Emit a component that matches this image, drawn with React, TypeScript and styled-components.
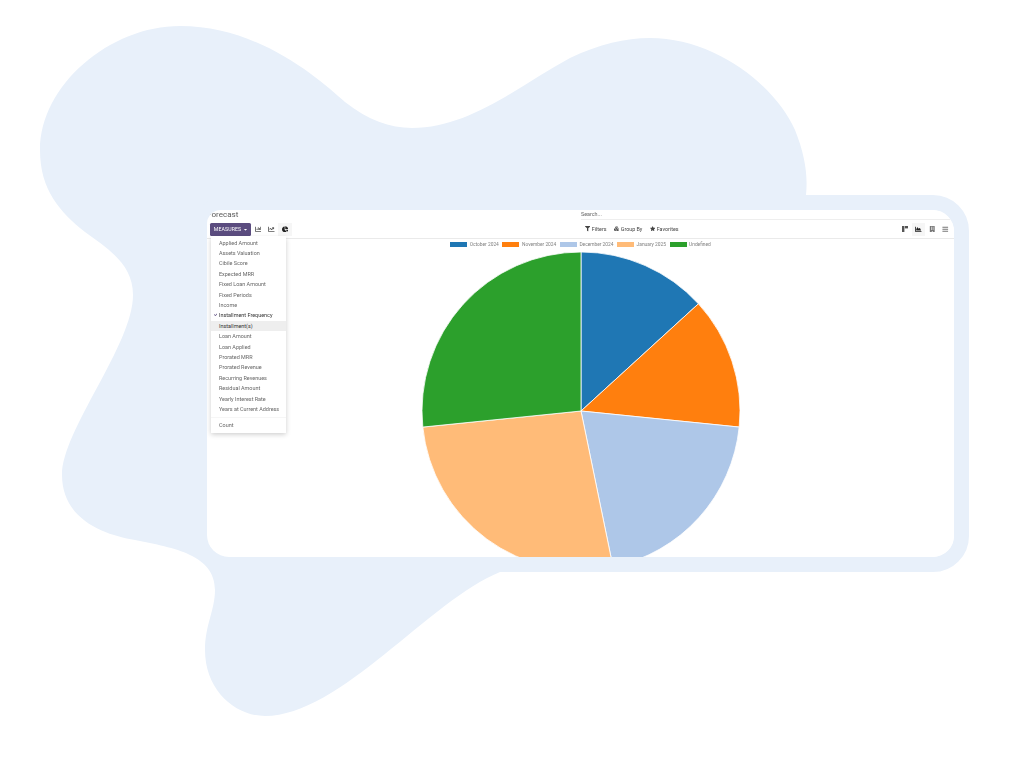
import styled, { createGlobalStyle } from "styled-components";
import {
  FaBars,
  FaBuilding,
  FaCaretDown,
  FaChartArea,
  FaChartBar,
  FaChartLine,
  FaChartPie,
  FaCheck,
  FaCubes,
  FaFilter,
  FaStar,
} from "react-icons/fa";

const GlobalStyle = createGlobalStyle`
  html, body {
    margin: 0;
    padding: 0;
    background: #ffffff;
    font-family: Roboto, "Liberation Sans", sans-serif;
  }
`;

const Page = styled.div`
  position: relative;
  width: 1024px;
  height: 768px;
  overflow: hidden;
  box-sizing: border-box;
  padding: 195px 55px 0 192px;
`;

const Blob = styled.svg`
  position: absolute;
  left: 0;
  top: 0;
  width: 1024px;
  height: 768px;
`;

const Frame = styled.div`
  position: relative;
  box-sizing: border-box;
  height: 377px;
  border: 15px solid #e8f0fa;
  border-radius: 36px;
`;

const Card = styled.div`
  height: 347px;
  background: #ffffff;
  border-radius: 14px 22px 22px 22px;
  overflow: hidden;
  position: relative;
`;

const Soft = styled.div`
  filter: blur(0.4px);
`;

const TitleRow = styled.div`
  display: flex;
  height: 9px;
  align-items: center;
`;

const Title = styled.div`
  width: 374px;
  font-size: 8.1px;
  color: #5a5a5a;
  line-height: 9px;
`;

const Search = styled.div`
  flex: 1;
  height: 9px;
  border-bottom: 1px solid #eeeeee;
  font-size: 5.4px;
  line-height: 8px;
  color: #666666;
`;

const Toolbar = styled.div`
  position: relative;
  height: 18px;
  margin-top: 1px;
  border-bottom: 1px solid #eaeaea;
  display: flex;
  align-items: center;
  padding: 0 2px 0 3px;
`;

const MeasuresBtn = styled.div`
  width: 41px;
  height: 13px;
  background: #5b4c7f;
  border-radius: 1.5px;
  color: #ffffff;
  font-size: 5.2px;
  letter-spacing: 0.1px;
  display: flex;
  align-items: center;
  justify-content: center;
  gap: 2px;
  padding-left: 1px;
  box-sizing: border-box;
`;

const ChartBtn = styled.div<{ $active?: boolean; $muted?: boolean }>`
  width: 13.5px;
  height: 13px;
  display: flex;
  align-items: center;
  justify-content: center;
  font-size: 6.5px;
  color: ${(p) => (p.$active ? "#222222" : p.$muted ? "#777777" : "#555555")};
  background: ${(p) => (p.$active ? "#f6f6f6" : "transparent")};
`;

const ChartBtns = styled.div`
  display: flex;
`;

const FilterGroup = styled.div`
  position: absolute;
  left: 378px;
  top: 0;
  height: 18px;
  display: flex;
  align-items: center;
  gap: 7.5px;
`;

const FilterBtn = styled.div`
  display: flex;
  align-items: center;
  gap: 1.5px;
  font-size: 5.35px;
  color: #444444;
  svg {
    font-size: 5.3px;
  }
`;

const ViewBtns = styled.div`
  margin-left: auto;
  display: flex;
`;

const Menu = styled.div`
  position: absolute;
  left: 4px;
  top: 16px;
  width: 75px;
  height: 197px;
  box-sizing: border-box;
  padding-top: 1.7px;
  background: #ffffff;
  box-shadow: 0 1.5px 5px rgba(0, 0, 0, 0.2);
  z-index: 2;
`;

const MenuItem = styled.div<{ $hover?: boolean; $strong?: boolean }>`
  position: relative;
  height: 10.4px;
  line-height: 10.4px;
  padding-left: 8px;
  font-size: 5.45px;
  white-space: nowrap;
  color: ${(p) => (p.$hover || p.$strong ? "#333333" : "#666666")};
  background: ${(p) => (p.$hover ? "#eeeeee" : "transparent")};
`;

const Tick = styled.span`
  position: absolute;
  left: 2.5px;
  top: 0;
  font-size: 3.5px;
  color: #5b4c7f;
`;

const MenuDivider = styled.div`
  height: 1px;
  background: #f6f6f6;
  margin: 2.2px 0;
`;

const Legend = styled.div`
  display: flex;
  justify-content: center;
  align-items: center;
  gap: 3.6px;
  height: 11px;
  font-size: 4.85px;
  color: #808080;
`;

const LegendItem = styled.div`
  display: flex;
  align-items: center;
  gap: 2.5px;
`;

const Swatch = styled.span<{ $color: string }>`
  width: 17px;
  height: 5px;
  background: ${(p) => p.$color};
`;

const PieWrap = styled.div`
  display: flex;
  justify-content: center;
  margin-top: 1px;
`;

const measures = [
  "Applied Amount",
  "Assets Valuation",
  "Cibile Score",
  "Expected MRR",
  "Fixed Loan Amount",
  "Fixed Periods",
  "Income",
  "Installment Frequency",
  "Installment(s)",
  "Loan Amount",
  "Loan Applied",
  "Prorated MRR",
  "Prorated Revenue",
  "Recurring Revenues",
  "Residual Amount",
  "Yearly Interest Rate",
  "Years at Current Address",
];

const slices = [
  { label: "October 2024", color: "#1f77b4", from: 0, to: 47.6 },
  { label: "November 2024", color: "#ff7f0e", from: 47.6, to: 95.8 },
  { label: "December 2024", color: "#aec7e8", from: 95.8, to: 168.4 },
  { label: "January 2025", color: "#ffbb78", from: 168.4, to: 264.2 },
  { label: "Undefined", color: "#2ca02c", from: 264.2, to: 360 },
];

function slicePath(from: number, to: number) {
  const r = 159;
  const point = (deg: number) => {
    const a = (deg * Math.PI) / 180;
    return `${(160 + r * Math.sin(a)).toFixed(2)} ${(160 - r * Math.cos(a)).toFixed(2)}`;
  };
  const large = to - from > 180 ? 1 : 0;
  return `M160 160 L${point(from)} A${r} ${r} 0 ${large} 1 ${point(to)} Z`;
}

function PivotIcon() {
  return (
    <svg width="6" height="6" viewBox="0 0 6 6" fill="currentColor">
      <rect x="0" y="0" width="2.4" height="6" />
      <rect x="2.9" y="0" width="3.1" height="2.4" />
    </svg>
  );
}

export default function App() {
  return (
    <Page>
      <GlobalStyle />
      <Blob viewBox="0 0 1024 768">
        <path
          fill="#e8f0fa"
          d="M180 26 C260 26 320 80 345 102 C368 120 390 128 412 128 C470 128 520 85 570 58 C600 44 625 38 650 38 C715 38 775 85 795 130 C805 155 808 175 806 195 L806 572 L500 572 C430 600 340 716 265 716 C235 716 205 690 205 650 C205 625 215 610 215 590 C215 555 175 548 135 540 C105 535 62 520 62 475 C62 430 133 345 133 295 C133 265 110 250 85 232 C60 212 40 190 40 150 C40 85 110 26 180 26 Z"
        />
      </Blob>
      <Frame>
        <Card>
          <Soft>
            <TitleRow>
              <Title>Forecast</Title>
              <Search>Search...</Search>
            </TitleRow>
            <Toolbar>
              <MeasuresBtn>
                MEASURES <FaCaretDown size={5} />
              </MeasuresBtn>
              <ChartBtns>
                <ChartBtn>
                  <FaChartBar />
                </ChartBtn>
                <ChartBtn>
                  <FaChartLine />
                </ChartBtn>
                <ChartBtn $active>
                  <FaChartPie />
                </ChartBtn>
              </ChartBtns>
              <FilterGroup>
                <FilterBtn>
                  <FaFilter /> Filters
                </FilterBtn>
                <FilterBtn>
                  <FaCubes /> Group By
                </FilterBtn>
                <FilterBtn>
                  <FaStar /> Favorites
                </FilterBtn>
              </FilterGroup>
              <ViewBtns>
                <ChartBtn>
                  <PivotIcon />
                </ChartBtn>
                <ChartBtn $active>
                  <FaChartArea />
                </ChartBtn>
                <ChartBtn $muted>
                  <FaBuilding />
                </ChartBtn>
                <ChartBtn $muted>
                  <FaBars />
                </ChartBtn>
              </ViewBtns>
              <Menu>
                {measures.map((m) => (
                  <MenuItem
                    key={m}
                    $hover={m === "Installment(s)"}
                    $strong={m === "Installment Frequency"}
                  >
                    {m === "Installment Frequency" && (
                      <Tick>
                        <FaCheck />
                      </Tick>
                    )}
                    {m}
                  </MenuItem>
                ))}
                <MenuDivider />
                <MenuItem>Count</MenuItem>
              </Menu>
            </Toolbar>
            <Legend>
              {slices.map((s) => (
                <LegendItem key={s.label}>
                  <Swatch $color={s.color} />
                  {s.label}
                </LegendItem>
              ))}
            </Legend>
          </Soft>
          <PieWrap>
            <svg width="320" height="320" viewBox="0 0 320 320">
              {slices.map((s) => (
                <path
                  key={s.label}
                  d={slicePath(s.from, s.to)}
                  fill={s.color}
                  stroke="#ffffff"
                  strokeWidth="0.8"
                />
              ))}
            </svg>
          </PieWrap>
        </Card>
      </Frame>
    </Page>
  );
}
